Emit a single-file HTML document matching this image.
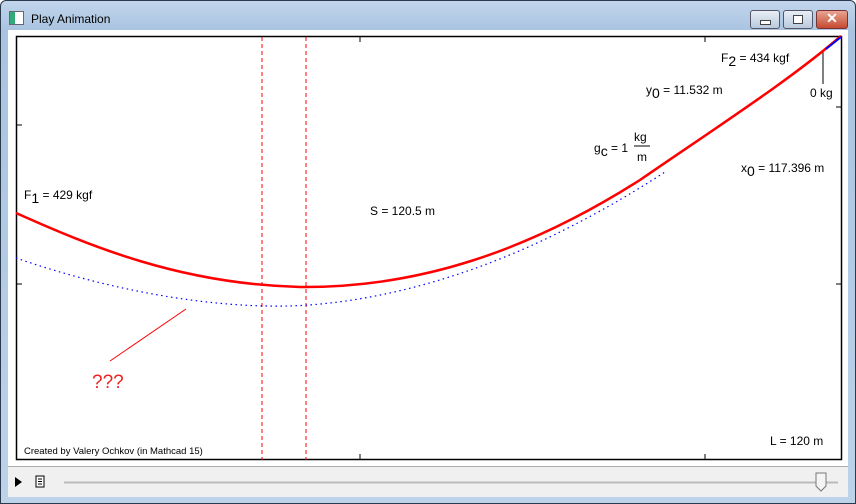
<!DOCTYPE html>
<html><head><style>
body{margin:0;width:856px;height:504px;overflow:hidden;font-family:"Liberation Sans",sans-serif;}
.win{position:absolute;left:0;top:0;width:854px;height:502px;border:1px solid #2b3a4d;border-radius:6px 6px 0 0;background:linear-gradient(#c2d6ec,#a9c3e0 30px,#bcd3ea);}
.title{position:absolute;left:30px;top:11px;font-size:12px;color:#000;}
.icon{position:absolute;left:8px;top:10px;width:13px;height:12px;border:1px solid #667;background:linear-gradient(90deg,#3a7 0 5px,#fff 5px);}
.btn{position:absolute;top:9px;height:17px;border:1px solid #556;border-radius:3px;background:linear-gradient(#e8eef6,#b9c9dd);}
.client{position:absolute;left:8px;top:30px;width:840px;height:466px;background:#fff;}
.bar{position:absolute;left:8px;top:466px;width:840px;height:30px;background:#f0f0f0;border-top:1px solid #aaa;}
</style></head><body>
<div class="win">
<div class="icon"></div>
<div class="title">Play Animation</div>
<div class="btn" style="left:749px;width:28px"><div style="position:absolute;left:9px;top:9px;width:9px;height:3px;border:1px solid #444;background:#fff"></div></div>
<div class="btn" style="left:782px;width:28px"><div style="position:absolute;left:9px;top:4px;width:8px;height:7px;border:1px solid #444;background:#fff"></div></div>
<div class="btn" style="left:815px;width:30px;background:linear-gradient(#e9a493,#c44a30);border-color:#733"><div style="position:absolute;left:0;width:30px;top:-1px;text-align:center;color:#fff;font-weight:bold;font-size:14px">✕</div></div>
</div>
<div class="client"></div>
<div class="bar"></div>
<svg width="856" height="504" style="position:absolute;left:0;top:0" font-family="Liberation Sans, sans-serif">
<rect x="16.5" y="36.5" width="825" height="423" fill="none" stroke="#000" stroke-width="1.5"/>
<g stroke="#000"><line x1="360" y1="36" x2="360" y2="42"/><line x1="705" y1="36" x2="705" y2="42"/><line x1="360" y1="460" x2="360" y2="454"/><line x1="705" y1="460" x2="705" y2="454"/><line x1="16" y1="284" x2="22" y2="284"/><line x1="16" y1="125" x2="22" y2="125"/><line x1="842" y1="107" x2="836" y2="107"/><line x1="842" y1="284" x2="836" y2="284"/><line x1="823" y1="50" x2="823" y2="84"/></g>
<g stroke="red" stroke-dasharray="4,3"><line x1="262" y1="37" x2="262" y2="460"/><line x1="306" y1="37" x2="306" y2="460"/></g>
<path d="M16,258 C100,287 200,308 290,306 C400,302 500,262 560,232 C610,207 640,188 665,172" fill="none" stroke="#00f" stroke-width="1.2" stroke-dasharray="1.5,3.5"/>
<path d="M16,213 C90,246 180,284 300,287 C420,288 530,250 640,180 C720,125 790,80 841,36" fill="none" stroke="red" stroke-width="2.5"/>
<line x1="826" y1="49" x2="841" y2="37" stroke="#00f" stroke-width="2"/>
<line x1="110" y1="361" x2="186" y2="309" stroke="red"/>
<text x="92" y="388" fill="#e22" font-size="19">???</text>
<g font-size="12" fill="#000">
<text x="24" y="199">F<tspan font-size="14" dy="4">1</tspan><tspan dy="-4"> = 429 kgf</tspan></text>
<text x="370" y="215">S = 120.5 m</text>
<text x="721" y="62">F<tspan font-size="14" dy="4">2</tspan><tspan dy="-4"> = 434 kgf</tspan></text>
<text x="646" y="94">y<tspan font-size="14" dy="4">0</tspan><tspan dy="-4"> = 11.532 m</tspan></text>
<text x="810" y="97">0 kg</text>
<text x="594" y="152">g<tspan font-size="14" dy="4">c</tspan><tspan dy="-4"> = 1</tspan></text>
<text x="634" y="141">kg</text><line x1="634" y1="146" x2="650" y2="146" stroke="#000"/><text x="637" y="161">m</text>
<text x="741" y="172">x<tspan font-size="14" dy="4">0</tspan><tspan dy="-4"> = 117.396 m</tspan></text>
<text x="770" y="445">L = 120 m</text>
<text x="24" y="454" font-size="9.5">Created by Valery Ochkov (in Mathcad 15)</text>
</g>
<path d="M15,477 L22,482 L15,487Z" fill="#000"/>
<rect x="36" y="476" width="8" height="11" fill="#fff" stroke="#000"/><g stroke="#000"><line x1="38" y1="479" x2="42" y2="479"/><line x1="38" y1="481.5" x2="42" y2="481.5"/><line x1="38" y1="484" x2="42" y2="484"/></g>
<line x1="64" y1="482.5" x2="838" y2="482.5" stroke="#bbb" stroke-width="2"/>
<path d="M816,473 h10 v13 l-5,5 l-5,-5Z" fill="#f4f4f4" stroke="#777"/>
</svg>
</body></html>
